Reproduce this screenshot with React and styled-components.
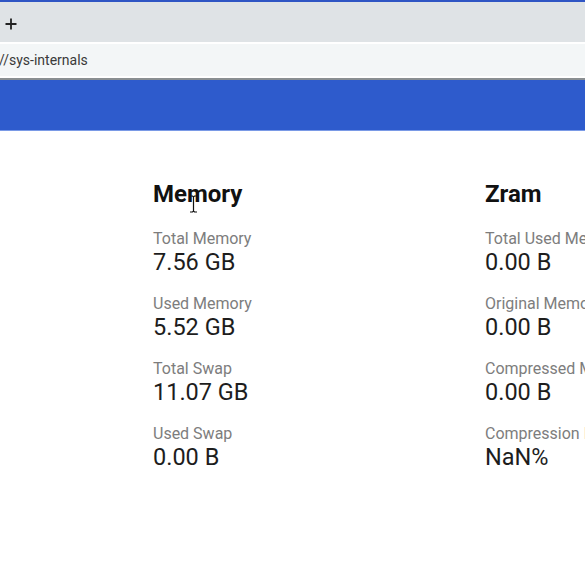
import React from "react";
import styled, { createGlobalStyle } from "styled-components";

const Global = createGlobalStyle`
  html, body { margin: 0; padding: 0; background: #ffffff; }
  body { font-family: Roboto, "Liberation Sans", sans-serif; overflow: hidden; }
`;

const Page = styled.div`
  width: 585px;
  height: 585px;
  display: flex;
  flex-direction: column;
  position: relative;
  overflow: hidden;
`;

const TabBar = styled.div`
  height: 40px;
  border-top: 2px solid #2f55c4;
  background: #dfe3e6;
  display: flex;
  align-items: center;
  padding-left: 4px;
`;

const PlusIcon = styled.svg`
  width: 14px;
  height: 14px;
  margin-top: 4px;
`;

const AddressBar = styled.div`
  height: 32px;
  border-top: 2px solid #ffffff;
  border-bottom: 2px solid #ffffff;
  background: #f3f6f7;
  display: flex;
  align-items: center;
  font-size: 14px;
  color: #3a3a3a;
`;

const AddressText = styled.span`
  margin-left: -1px;
`;

const Divider = styled.div`
  height: 2px;
  background: #8a8f92;
`;

const AppHeader = styled.div`
  height: 50px;
  background: #2e5bcc;
  border-bottom: 1px solid #7a9ae6;
`;

const Content = styled.div`
  display: flex;
  padding: 50px 0 0 153px;
`;

const Column = styled.section`
  width: 332px;
  flex-shrink: 0;
  display: flex;
  flex-direction: column;
`;

const Heading = styled.h2`
  margin: 0 0 22px 0;
  font-size: 24px;
  font-weight: 700;
  color: #111111;
  line-height: 26px;
  white-space: nowrap;
`;

const Stat = styled.div`
  display: flex;
  flex-direction: column;
  margin-bottom: 19px;
`;

const Label = styled.div`
  font-size: 16px;
  color: #7d7d7d;
  line-height: 19px;
  white-space: nowrap;
`;

const Value = styled.div`
  font-size: 23.5px;
  color: #1d1d1d;
  line-height: 27px;
  margin-top: 1px;
  margin-bottom: -1px;
  white-space: nowrap;
`;

const Cursor = styled.svg`
  position: absolute;
  left: 189px;
  top: 195px;
  width: 9px;
  height: 18px;
`;

const memory = [
  ["Total Memory", "7.56 GB"],
  ["Used Memory", "5.52 GB"],
  ["Total Swap", "11.07 GB"],
  ["Used Swap", "0.00 B"],
];

const zram = [
  ["Total Used Memory", "0.00 B"],
  ["Original Memory", "0.00 B"],
  ["Compressed Memory", "0.00 B"],
  ["Compression Ratio", "NaN%"],
];

function Panel({ title, items }) {
  return (
    <Column>
      <Heading>{title}</Heading>
      {items.map(([l, v]) => (
        <Stat key={l}>
          <Label>{l}</Label>
          <Value>{v}</Value>
        </Stat>
      ))}
    </Column>
  );
}

export default function App() {
  return (
    <>
      <Global />
      <Page>
        <TabBar>
          <PlusIcon viewBox="0 0 14 14">
            <path d="M7 1.5v11M1.5 7h11" stroke="#222" strokeWidth="1.8" />
          </PlusIcon>
        </TabBar>
        <AddressBar>
          <AddressText>//sys-internals</AddressText>
        </AddressBar>
        <Divider />
        <AppHeader />
        <Content>
          <Panel title="Memory" items={memory} />
          <Panel title="Zram" items={zram} />
        </Content>
        <Cursor viewBox="0 0 9 18">
          <path d="M1 1h2.5L4.5 2l1-1H8M4.5 2v14M1 17h2.5l1-1 1 1H8" stroke="#111" strokeWidth="1.2" fill="none" />
        </Cursor>
      </Page>
    </>
  );
}
